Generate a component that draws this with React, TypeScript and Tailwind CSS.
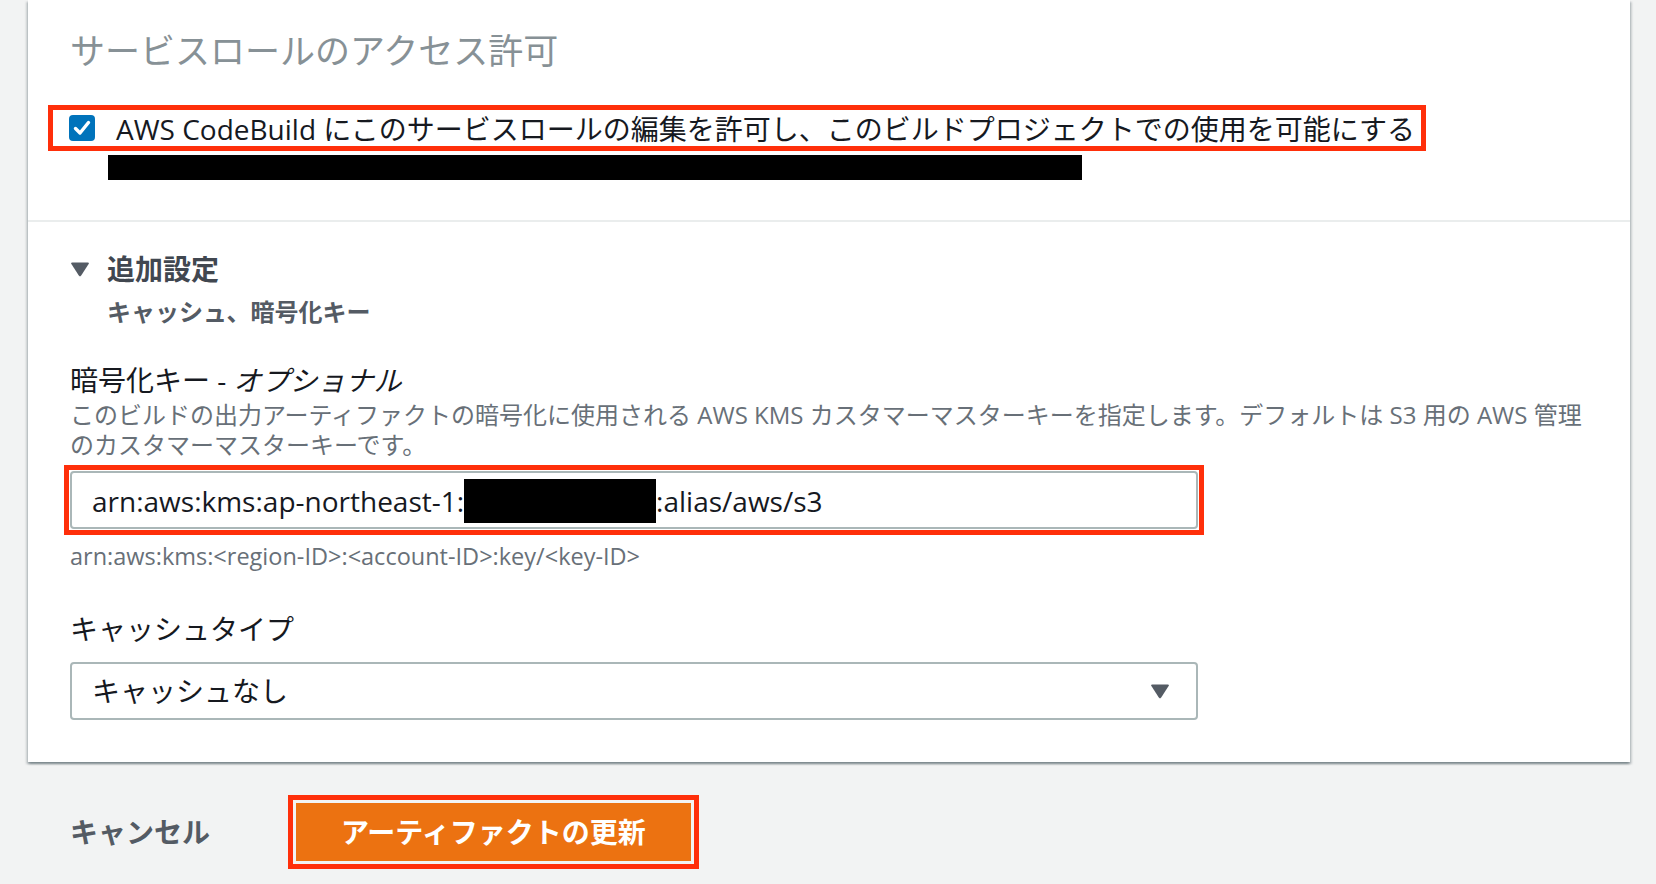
const Caret = ({ className }: { className?: string }) => (
  <svg viewBox="0 0 20 16" className={className} fill="currentColor">
    <path d="M2.2 1.5 H17.8 Q19.4 1.5 18.6 3 L11.2 14.6 Q10 16.2 8.8 14.6 L1.4 3 Q0.6 1.5 2.2 1.5 Z" />
  </svg>
)

const CheckBox = () => (
  <div className="w-[26px] h-[26px] rounded-[4px] bg-[#0073bb] flex items-center justify-center shrink-0">
    <svg viewBox="0 0 26 26" className="w-[26px] h-[26px]">
      <path d="M6.5 13.5 L11 18 L19.5 7.5" fill="none" stroke="white" strokeWidth="3.4" strokeLinecap="round" strokeLinejoin="round" />
    </svg>
  </div>
)

export default function App() {
  return (
    <div className="w-full h-[884px] overflow-hidden bg-[#f2f3f3] pl-[28px] pr-[26px] font-['Open_Sans','Noto_Sans_CJK_JP',sans-serif]">
      {/* container */}
      <div className="bg-white shadow-[0_2px_2px_0_rgba(0,28,36,0.3),2px_2px_2px_0_rgba(0,28,36,0.15),-2px_2px_2px_0_rgba(0,28,36,0.15)]">
        {/* service role */}
        <div className="pl-[42px] pr-[40px] pt-[29px] pb-[40px] border-b-2 border-[#eaeded]">
          <h2 className="text-[35px] leading-[44px] text-[#879196] font-normal">
            サービスロールのアクセス許可
          </h2>
          <div className="mt-[32px] -ml-[22px] inline-flex border-[5px] border-[#ff2f0a]">
            <div className="flex items-center h-[36px] pl-[16px] pr-[6px] gap-[21px]">
              <CheckBox />
              <span className="text-[28px] leading-[36px] pt-[2px] text-[#16191f] whitespace-nowrap">
                AWS CodeBuild にこのサービスロールの編集を許可し、このビルドプロジェクトでの使用を可能にする
              </span>
            </div>
          </div>
          <div className="mt-[4px] ml-[38px] w-[974px] h-[25px] bg-black" />
        </div>

        {/* additional settings */}
        <div className="pl-[42px] pr-[40px] pt-[29px] pb-[42px]">
          <div className="flex items-center gap-[17px]">
            <Caret className="w-[20px] h-[16px] text-[#545b64]" />
            <span className="text-[28px] leading-[36px] font-bold text-[#414750]">追加設定</span>
          </div>
          <div className="mt-[9px] pl-[37px] text-[24px] leading-[32px] font-bold text-[#545b64]">
            キャッシュ、暗号化キー
          </div>

          <div className="mt-[34px] text-[28px] leading-[36px] text-[#16191f]">
            暗号化キー - <i>オプショナル</i>
          </div>
          <p className="mt-[2px] text-[24px] leading-[30px] text-[#687078] whitespace-nowrap">
            このビルドの出力アーティファクトの暗号化に使用される AWS KMS カスタマーマスターキーを指定します。デフォルトは S3 用の AWS 管理
            <br />
            のカスタマーマスターキーです。
          </p>
          <div className="mt-[5px] -ml-[6px] w-[1140px] border-[5px] border-[#ff2f0a] p-[1px]">
            <div className="h-[58px] border-2 border-[#aab7b8] rounded-[4px] flex items-center pl-[20px] pt-[2px] text-[28px] text-[#16191f] whitespace-nowrap">
              <span>arn:aws:kms:ap-northeast-1:</span>
              <span className="inline-block w-[192px] h-[44px] bg-black" />
              <span>:alias/aws/s3</span>
            </div>
          </div>
          <div className="mt-[6px] text-[23.5px] leading-[30px] text-[#687078]">
            arn:aws:kms:&lt;region-ID&gt;:&lt;account-ID&gt;:key/&lt;key-ID&gt;
          </div>

          <div className="mt-[40px] text-[28px] leading-[36px] text-[#16191f]">キャッシュタイプ</div>
          <div className="mt-[15px] w-[1128px] h-[58px] border-2 border-[#aab7b8] rounded-[4px] flex items-center justify-between pl-[20px] pr-[26px]">
            <span className="text-[28px] text-[#16191f]">キャッシュなし</span>
            <Caret className="w-[20px] h-[16px] text-[#545b64]" />
          </div>
        </div>
      </div>

      {/* footer actions */}
      <div className="mt-[33px] pl-[42px] flex items-center">
        <button className="w-[140px] text-left text-[28px] leading-[36px] font-bold text-[#545b64]">キャンセル</button>
        <div className="ml-[78px] border-[5px] border-[#ff2f0a] p-[3px]">
          <button className="h-[58px] px-[45px] bg-[#ec7211] text-white text-[28px] font-bold leading-[58px] whitespace-nowrap">
            アーティファクトの更新
          </button>
        </div>
      </div>
    </div>
  )
}
